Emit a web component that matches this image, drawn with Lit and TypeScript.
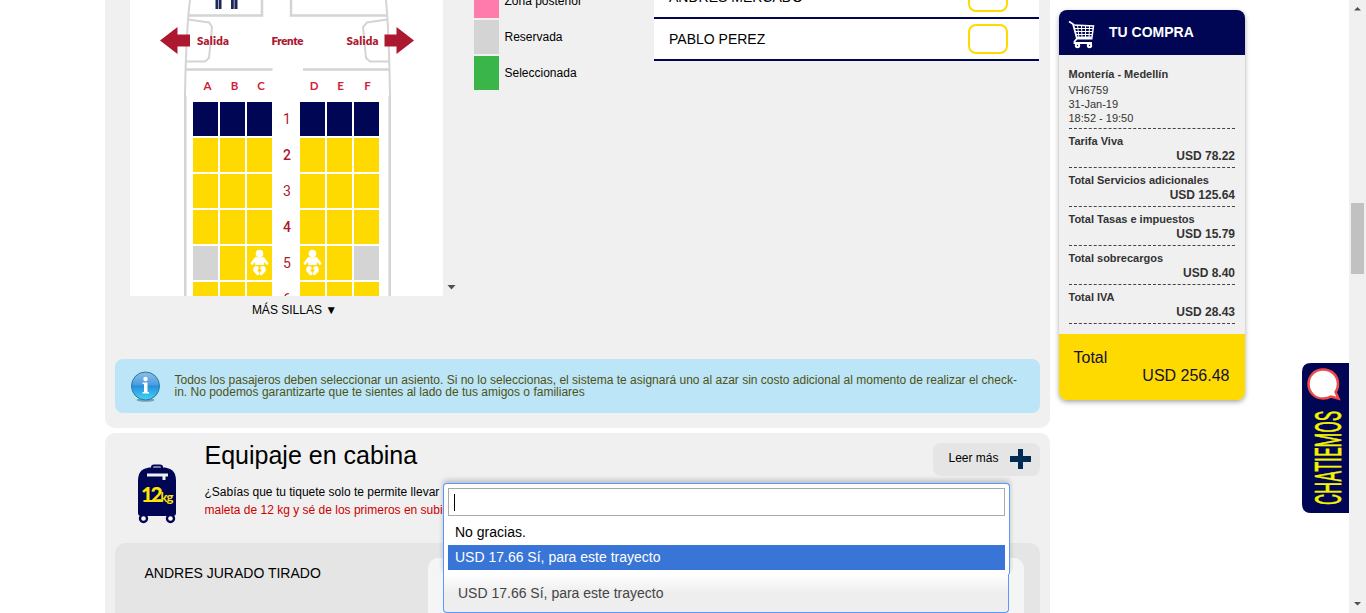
import { LitElement, html, svg, css } from "lit";
import { customElement, property } from "lit/decorators.js";

const base = css`
  * { box-sizing: border-box; }
  :host { font-family: "Liberation Sans", Arial, sans-serif; }
  svg { display: block; }
`;

@customElement("seat-map")
class SeatMap extends LitElement {
  static styles = [base, css`
    :host { display: block; width: 313px; }
    .window { display: grid; width: 313px; height: 296px; overflow: hidden; background: #fff; }
    .window > * { grid-area: 1 / 1; }
    .lbl { font: 800 11.500px Lato, sans-serif; fill: #ad1831; }
    .col { fill: #cf1f3c; font-weight: 700; }
    .seats { display: grid; grid-template-columns: 25px 25px 25px 24px 25px 25px 25px; grid-auto-rows: 34px; gap: 2px; padding: 102px 0 0 63px; align-content: start; height: 296px; }
    .seat { background: #ffda00; display: flex; justify-content: center; }
    .first { background: #000554; }
    .reserved { background: #d4d4d4; }
    .num { color: #ad1831; font: 400 14px/34px Roboto, sans-serif; text-align: center; padding-left: 2px; }
    .dark { font-weight: 500; }
    .more { font-size: 12px; line-height: 14px; text-align: center; margin-top: 7px; padding-left: 16px; white-space: nowrap; }
  `];
  baby() {
    return html`<svg width="25" height="34" viewBox="0 0 25 34">
      <circle cx="12.500" cy="7.500" r="3.800" fill="#fff"/>
      <path d="M8.800 12.600L5 17.300M16.200 12.600L20 17.300" stroke="#fff" stroke-width="2.800" stroke-linecap="round"/>
      <path d="M8.500 11.300H16.500L17.300 15L16.700 19H8.300L7.700 15Z" fill="#fff"/>
      <path d="M7.600 20.300H10.900L12.100 22.500L10.300 24.300L12.200 26.800C12.800 28.500 11.400 29.800 9.800 28.900L6.200 25C5.900 23.200 6.700 21.400 7.600 20.300ZM17.400 20.300H14.100L12.900 22.500L14.700 24.300L12.800 26.800C12.200 28.500 13.600 29.800 15.200 28.900L18.800 25C19.100 23.200 18.300 21.400 17.400 20.300Z" fill="#fff"/>
    </svg>`;
  }
  render() {
    const rows = [1, 2, 3, 4, 5, 6];
    const cell = (r: number, c: number) => html`<div class="seat ${r === 1 ? "first" : r === 5 && (c === 0 || c === 5) ? "reserved" : ""}">${r === 5 && (c === 2 || c === 3) ? this.baby() : ""}</div>`;
    return html`
      <div class="window">
        <svg width="313" height="296" viewBox="130 0 313 296">
          <g fill="none" stroke="#d4d4d4" stroke-width="2">
            <path d="M190 0Q186 32 185 96V296M386 0Q389 32 390 96V296"/>
            <path d="M188.500 15.500H262V0M386.500 15.500H291V0M186 69.500H272.500M303 69.500H389" stroke-width="2.500"/>
            <path d="M188 19.500L209 22.500L212 27L209 58L205 61.500H187M387 19.500L367 22.500L363 27L366 58L370 61.500H389"/>
          </g>
          <path d="M186.500 96V296M388.500 96V296" stroke="#e8e8e8"/>
          <path d="M215.500 0H221.500V9H215.500ZM231 0H237.500V9H231Z" fill="#1e2856"/>
          <path d="M218.500 0V9M234.200 0V9" stroke="#aaaec1"/>
          <path d="M160 40.500L177.500 27V34.500H190V46.500H177.500V54ZM414 40.500L396.500 27V34.500H384.500V46.500H396.500V54Z" fill="#ad1831"/>
          <text class="lbl" x="197" y="44.500" textLength="32">Salida</text>
          <text class="lbl" x="271.500" y="44.500" textLength="32">Frente</text>
          <text class="lbl" x="346.500" y="44.500" textLength="32">Salida</text>
          ${["A", "B", "C", "D", "E", "F"].map((l, i) => svg`<text class="lbl col" text-anchor="middle" x=${[207.5, 234.5, 261, 314, 340.5, 367.5][i]} y="90">${l}</text>`)}
        </svg>
        <div class="seats">
          ${rows.map(r => html`${[0, 1, 2].map(c => cell(r, c))}<div class="num ${r === 2 || r === 4 ? "dark" : ""}">${r}</div>${[3, 4, 5].map(c => cell(r, c))}`)}
        </div>
      </div>
      <div class="more">MÁS SILLAS ▼</div>`;
  }
}

@customElement("purchase-summary")
class PurchaseSummary extends LitElement {
  static styles = [base, css`
    :host { display: block; width: 186px; height: 390px; border-radius: 8px; overflow: hidden; background: #f0f0f0; box-shadow: 0 2px 5px rgba(0,0,0,.35); color: #333; }
    .head { height: 45px; background: #000554; color: #fff; display: flex; align-items: center; font: 700 14px "Liberation Sans", sans-serif; padding-left: 9px; gap: 14px; }
    .cart { margin-top: 3px; }
    .name { padding-bottom: 2px; }
    .body { height: 279px; padding: 11px 10px 0 9.500px; font-size: 11px; }
    .flight { height: 63px; line-height: 14px; border-bottom: 1px dashed #444; }
    .route { font-weight: 700; line-height: 17px; }
    .line { height: 39px; border-bottom: 1px dashed #444; font-weight: 700; padding-top: 5px; line-height: 14px; }
    .amount { font-size: 12px; text-align: right; line-height: 16px; }
    .total { height: 66px; background: #ffda00; color: #111133; font-size: 16px; line-height: 18px; padding: 15px 15.500px 0 14.500px; }
    .right { text-align: right; }
  `];
  render() {
    const lines = [["Tarifa Viva", "78.22"], ["Total Servicios adicionales", "125.64"], ["Total Tasas e impuestos", "15.79"], ["Total sobrecargos", "8.40"], ["Total IVA", "28.43"]];
    return html`
      <div class="head">
        <svg class="cart" width="27" height="30" viewBox="0 0 27 30" fill="none" stroke="#fff">
          <path d="M1 2.500L5 5L9 19.500H24.500M9 19.500L6.500 22.500V24H24" stroke-width="1.800"/>
          <path d="M5 6L25.500 7L24 18L9 18.500" stroke-width="1.500"/>
          <path d="M6 9.500H25M7 12.500H25M8 15.500H24.500M9.500 6L11 19M13.500 6L14 19M17.500 7L17.500 19M21.500 7L21 19"/>
          <circle cx="9.500" cy="26.500" r="1.700" stroke-width="2"/><circle cx="21.500" cy="26.500" r="1.700" stroke-width="2"/>
        </svg>
        <span class="name">TU COMPRA</span>
      </div>
      <div class="body">
        <div class="flight"><div class="route">Montería - Medellín</div>VH6759<br>31-Jan-19<br>18:52 - 19:50</div>
        ${lines.map(([n, v]) => html`<div class="line">${n}<div class="amount">USD ${v}</div></div>`)}
      </div>
      <div class="total">Total<div class="right">USD 256.48</div></div>`;
  }
}

@customElement("baggage-select")
class BaggageSelect extends LitElement {
  @property() value = "USD 17.66 Sí, para este trayecto";
  static styles = [base, css`
    :host { display: block; width: 567px; font-size: 14px; }
    .drop { height: 91px; border: 1px solid #5897fb; border-bottom: 0; border-radius: 4px 4px 0 0; background: #fff; padding: 4px 4px 0; box-shadow: 0 -3px 5px rgba(0,0,0,.2); }
    .search { height: 28px; border: 1px solid #aaa; padding: 5px; }
    .caret { width: 1px; height: 17px; background: #000; }
    .opt { height: 25px; line-height: 25px; padding-left: 7px; }
    .plain { margin-top: 4px; }
    .active { color: #fff; background: #3875d7; }
    .current { width: 566px; height: 39px; border: 1px solid #5897fb; border-top: 0; border-radius: 0 0 4px 4px; background: linear-gradient(#fff, #eee 50%); color: #444; line-height: 38px; padding-left: 14px; }
  `];
  render() {
    return html`<div class="drop"><div class="search"><div class="caret"></div></div>
      <div class="opt plain">No gracias.</div><div class="opt active">${this.value}</div></div>
      <div class="current">${this.value}</div>`;
  }
}

@customElement("app-root")
class AppRoot extends LitElement {
  static styles = [base, css`
    :host { display: block; }
    .page { position: relative; display: flex; width: 1366px; height: 613px; overflow: hidden; background: #fff; color: #000; padding-left: 105px; }
    .main { width: 945px; display: flex; flex-direction: column; gap: 5px; height: 613px; }
    .choose { height: 428px; flex: none; background: #f0f0f0; border-radius: 0 0 10px 10px; padding: 0 10px; }
    .top { height: 359px; display: flex; padding-left: 15px; }
    .arrow { width: 9px; flex: none; margin: 285px 18px 0 4px; }
    .legend { width: 180px; height: 90px; overflow: hidden; display: flex; flex-direction: column; justify-content: flex-end; gap: 2px; font-size: 12px; }
    .key { height: 34px; flex: none; display: flex; align-items: center; gap: 5.500px; }
    .swatch { width: 25px; height: 34px; }
    .pink { background: #ff7bac; } .gray { background: #d4d4d4; } .green { background: #39b54a; }
    .people { width: 385px; height: 61px; overflow: hidden; display: flex; flex-direction: column; justify-content: flex-end; }
    .person { height: 42px; flex: none; border-bottom: 2px solid #000554; background: #fff; display: flex; justify-content: space-between; align-items: center; padding: 0 31px 0 15px; font-size: 14px; }
    .box { width: 40px; height: 30px; border: 2px solid #ffda00; border-radius: 8px; }
    .info { height: 54px; background: #bce5f7; border-radius: 8px; display: flex; align-items: center; padding-left: 15px; gap: 13.500px; font-size: 12px; line-height: 12px; color: #4f5214; white-space: nowrap; }
    .bag { height: 180px; background: #f0f0f0; border-radius: 10px 10px 0 0; padding: 10px 10px 0; }
    .intro { height: 100px; display: flex; padding-left: 22px; }
    .case { margin: 21px 27.500px 0 0; flex: none; }
    .copy { flex: 1; font-size: 12px; line-height: 18px; }
    .title { font-size: 25px; line-height: 25px; margin-bottom: 15px; }
    .red { color: #cc0000; }
    .read { width: 107px; flex: none; height: 33px; background: #e5e5e5; border-radius: 8px; display: flex; align-items: center; padding-left: 15.500px; gap: 11px; font-size: 12px; }
    .label { padding-bottom: 4px; }
    .plus { margin-bottom: 1px; }
    .panel { height: 70px; background: #e5e5e5; border-radius: 10px 10px 0 0; display: flex; justify-content: space-between; padding: 15px 16px 0 29.500px; font-size: 14px; line-height: 30px; }
    .choice { width: 596px; height: 55px; border-radius: 10px 10px 0 0; background: #f5f5f5; }
    .aside { margin: 10px 0 0 9px; }
    .menu { position: absolute; left: 443px; top: 483px; }
    .chat { position: absolute; left: 1302px; top: 363px; }
    .chattext { font: 400 36px Roboto, sans-serif; fill: #f4f400; stroke: #f4f400; stroke-width: .6px; }
    .scroll { position: absolute; right: 0; top: 0; width: 17px; height: 613px; background: #f0f0f0; }
  `];
  render() {
    return html`<div class="page">
      <div class="main">
        <section class="choose">
          <div class="top">
            <seat-map></seat-map>
            <svg class="arrow" width="9" height="5"><path d="M.5 0H8.500L4.500 4.500Z" fill="#505050"/></svg>
            <div class="legend">
              <div class="key"><div class="swatch pink"></div>Zona posterior</div>
              <div class="key"><div class="swatch gray"></div>Reservada</div>
              <div class="key"><div class="swatch green"></div>Seleccionada</div>
            </div>
            <div class="people">
              <div class="person">ANDRES MERCADO<div class="box"></div></div>
              <div class="person">PABLO PEREZ<div class="box"></div></div>
            </div>
          </div>
          <div class="info">
            <svg width="31" height="31" viewBox="0 0 31 31">
              <defs><linearGradient id="g" x2="0" y2="1"><stop offset="0" stop-color="#8fc0e8"/><stop offset=".45" stop-color="#4a9ee0"/><stop offset=".5" stop-color="#2590dd"/><stop offset="1" stop-color="#43d4f7"/></linearGradient></defs>
              <ellipse cx="15.500" cy="29" rx="9" ry="1.800" fill="#7d9eab"/>
              <circle cx="15.500" cy="15" r="14" fill="url(#g)" stroke="#2b7a9d"/>
              <circle cx="15.500" cy="8" r="2.200" fill="#fff"/>
              <path d="M12.500 11.500H17.500V21H19V22.500H12.500V21H14V13H12.500Z" fill="#fff"/>
            </svg>
            <div>Todos los pasajeros deben seleccionar un asiento. Si no lo seleccionas, el sistema te asignará uno al azar sin costo adicional al momento de realizar el check-<br>in. No podemos garantizarte que te sientes al lado de tus amigos o familiares</div>
          </div>
        </section>
        <section class="bag">
          <div class="intro">
            <svg class="case" width="40" height="60" viewBox="137 464 40 60">
              <path d="M152 469V467Q152 465.500 154 465.500H160Q162 465.500 162 467V469" fill="none" stroke="#000554" stroke-width="2"/>
              <path d="M149 467.500H165C173 469 176 473 176 481V513Q176 516 173 516H141Q138 516 138 513V481C138 473 141 469 149 467.500Z" fill="#000554"/>
              <path d="M147 473.500H168V476.500H165.500V480H162.500V476.500H147Z" fill="#f0f0f0"/>
              <circle cx="143.500" cy="518.500" r="3.500" fill="#fff" stroke="#000554" stroke-width="2.400"/>
              <circle cx="170.500" cy="518.500" r="3.500" fill="#fff" stroke="#000554" stroke-width="2.400"/>
              <text y="502" font-family="Lato" font-weight="900" fill="#ffe600"><tspan x="141" font-size="21" letter-spacing="-2.800">12</tspan><tspan x="160.500" font-size="13" font-weight="700" letter-spacing="-1">kg</tspan></text>
            </svg>
            <div class="copy">
              <div class="title">Equipaje en cabina</div>
              <div>¿Sabías que tu tiquete solo te permite llevar</div>
              <div class="red">maleta de 12 kg y sé de los primeros en subir</div>
            </div>
            <div class="read"><span class="label">Leer más</span>
              <svg class="plus" width="21" height="20"><path d="M8 0H13V7H21V13H13V20H8V13H0V7H8Z" fill="#002b52"/></svg>
            </div>
          </div>
          <div class="panel">ANDRES JURADO TIRADO<div class="choice"></div></div>
        </section>
      </div>
      <purchase-summary class="aside"></purchase-summary>
      <baggage-select class="menu"></baggage-select>
      <svg class="chat" width="47" height="150" viewBox="0 0 47 150">
        <path d="M9 0H47V150H9Q0 150 0 141V9Q0 0 9 0Z" fill="#000554"/>
        <path d="M21 6.500C30 6.500 36 13 36 21Q36 26 33.500 29L36.500 35.500L29 33.500Q26 35.500 21 35.500C12.500 35.500 6.500 29 6.500 21S12.500 6.500 21 6.500Z" fill="#fff" stroke="#f0494b" stroke-width="2.500"/>
        <text class="chattext" transform="translate(39 142) rotate(-90)" textLength="94" lengthAdjust="spacingAndGlyphs">CHATIEMOS</text>
      </svg>
      <svg class="scroll" width="17" height="613"><path d="M5 10.500L8.500 7L12 10.500ZM5 602L8.500 605.500L12 602Z" fill="#505050"/><path d="M2 203H15V274H2Z" fill="#c1c1c1"/></svg>
    </div>`;
  }
}
